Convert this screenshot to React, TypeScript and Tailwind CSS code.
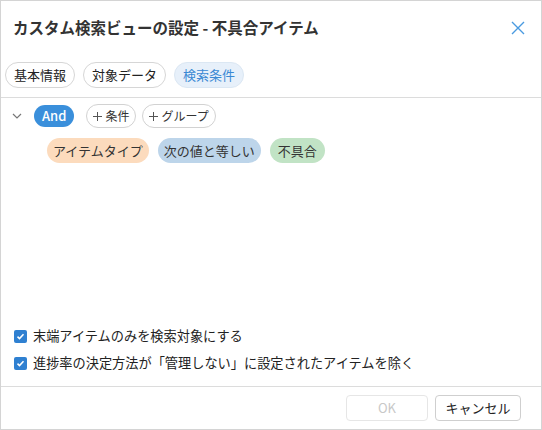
import React from 'react';

const font = { fontFamily: '"Noto Sans CJK JP", "Noto Sans", sans-serif' };

const Tab = ({ label, active }: { label: string; active?: boolean }) => (
  <div
    className={
      active
        ? 'flex h-[26px] items-center rounded-full border border-[#dbe7f3] bg-[#e7f0fa] px-[8px] text-[13px] text-[#3a89d4]'
        : 'flex h-[26px] items-center rounded-full border border-[#d6d6d6] bg-white px-[8px] text-[13px] text-[#222]'
    }
  >
    {label}
  </div>
);

const AddButton = ({ label }: { label: string }) => (
  <button className="flex h-6 items-center gap-[2px] rounded-full border border-[#d2d2d2] bg-white pl-[5px] pr-[6px] text-[12px] text-[#333]">
    <svg width="11" height="11" viewBox="0 0 11 11" className="text-[#555]">
      <path d="M5.5 1v9M1 5.5h9" stroke="currentColor" strokeWidth="1" />
    </svg>
    <span>{label}</span>
  </button>
);

const Chip = ({ label, className }: { label: string; className: string }) => (
  <div className={`flex h-[25px] items-center rounded-full px-[6px] text-[13px] text-[#333] ${className}`}>
    {label}
  </div>
);

const Check = ({ label }: { label: string }) => (
  <label className="flex h-5 items-center gap-[6px] text-[13.2px] text-[#222]">
    <span className="flex h-[13px] w-[13px] items-center justify-center rounded-[2px] bg-[#2f80d1]">
      <svg width="9" height="9" viewBox="0 0 9 9">
        <path d="M1.5 4.6l2 2 4-4.4" fill="none" stroke="white" strokeWidth="1.5" />
      </svg>
    </span>
    {label}
  </label>
);

export default function App() {
  return (
    <div
      style={font}
      className="flex h-[430px] w-[542px] flex-col border border-[#d4d4d4] bg-white text-[#333]"
    >
      <div className="flex h-[53px] items-center justify-between pl-3 pr-[16px]">
        <h1 className="text-[15.5px] font-bold text-[#333]">
          カスタム検索ビューの設定 - 不具合アイテム
        </h1>
        <svg width="14" height="14" viewBox="0 0 14 14" className="text-[#4a9ae0]">
          <path d="M1 1l12 12M13 1L1 13" stroke="currentColor" strokeWidth="1.4" />
        </svg>
      </div>

      <div className="flex gap-[8px] border-b border-[#dcdcdc] pb-[9px] pl-1 pt-[8px]">
        <Tab label="基本情報" />
        <Tab label="対象データ" />
        <Tab label="検索条件" active />
      </div>

      <div className="flex flex-1 flex-col pl-[11px] pt-[6px]">
        <div className="flex h-6 items-center">
          <svg width="10" height="6" viewBox="0 0 10 6" className="text-[#777]">
            <path d="M1 1l4 4 4-4" fill="none" stroke="currentColor" strokeWidth="1.2" />
          </svg>
          <div className="ml-[12px] flex h-[22px] items-center rounded-full bg-[#3a8fdb] px-[8px] text-[13px] font-medium text-white">
            And
          </div>
          <div className="ml-[12px] flex gap-[6px]">
            <AddButton label="条件" />
            <AddButton label="グループ" />
          </div>
        </div>
        <div className="ml-[35px] mt-[10px] flex gap-[9px]">
          <Chip label="アイテムタイプ" className="bg-[#fcdbbd]" />
          <Chip label="次の値と等しい" className="bg-[#bdd5ea]" />
          <Chip label="不具合" className="bg-[#c1e3c5] px-[8px]" />
        </div>
      </div>

      <div className="flex flex-col gap-[7px] pb-[13px] pl-[13px]">
        <Check label="末端アイテムのみを検索対象にする" />
        <Check label="進捗率の決定方法が「管理しない」に設定されたアイテムを除く" />
      </div>

      <div className="flex h-[43px] items-center justify-end gap-[7px] border-t border-[#dcdcdc] pr-[20px]">
        <button
          disabled
          className="h-[26px] w-[82px] rounded-[4px] border border-[#e6e6e6] bg-white text-[13px] text-[#c8c8c8]"
        >
          OK
        </button>
        <button className="h-[26px] w-[86px] rounded-[4px] border border-[#cfcfcf] bg-white text-[13px] text-[#222]">
          キャンセル
        </button>
      </div>
    </div>
  );
}
